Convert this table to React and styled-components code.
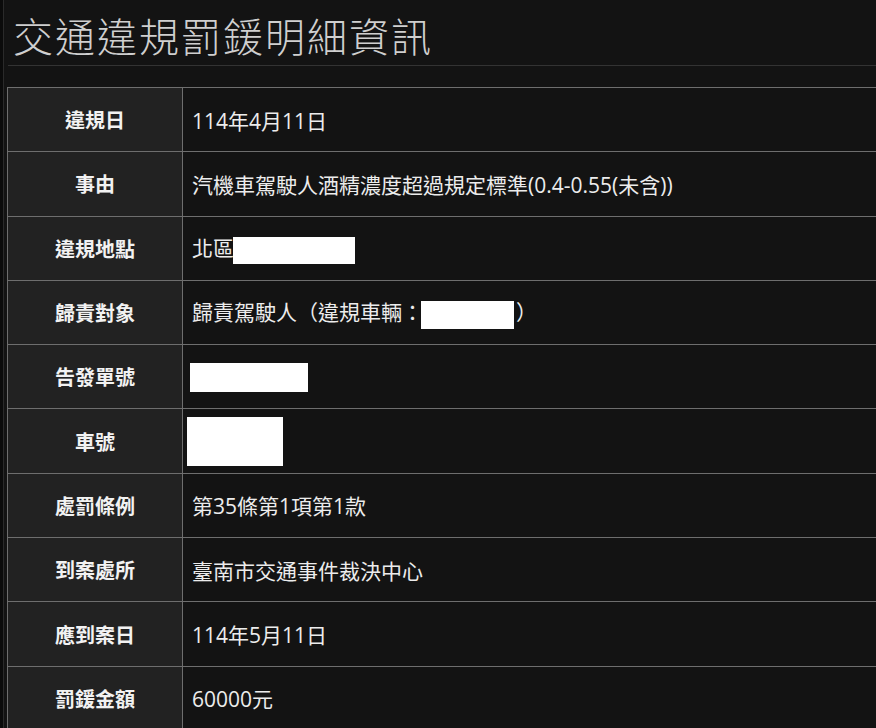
import React from "react";
import styled, { createGlobalStyle } from "styled-components";

const GlobalStyle = createGlobalStyle`
  html, body {
    margin: 0;
    padding: 0;
    background: #131313;
    overflow: hidden;
  }
  body {
    font-family: "Noto Sans CJK TC", "Noto Sans", sans-serif;
  }
`;

const Frame = styled.div`
  min-height: 728px;
  border-left: 3px solid #0b0b0b;
`;

const Content = styled.div`
  min-height: 728px;
  border-left: 1px solid #2a2a2a;
  padding-left: 3px;
`;

const Title = styled.h1`
  margin: 0;
  padding: 11px 0 6px 5px;
  margin-left: 1px;
  font-size: 40px;
  line-height: 48px;
  font-weight: 300;
  letter-spacing: 2px;
  color: #cfcfcf;
  border-bottom: 1px solid #333;
  white-space: nowrap;
`;

const Table = styled.table`
  margin-top: 21px;
  width: 1000px;
  border-collapse: collapse;
  border: 1px solid #6e6e6e;
`;

const Row = styled.tr`
  height: 64.3px;
`;

const Label = styled.th`
  width: 174px;
  padding: 0;
  background: #222;
  border: 1px solid #6e6e6e;
  color: #f2f2f2;
  font-size: 20px;
  font-weight: 700;
  text-align: center;
  vertical-align: middle;
`;

const Value = styled.td`
  padding: 0 0 0 9px;
  background: #131313;
  border: 1px solid #6e6e6e;
  color: #ececec;
  font-family: "Open Sans", "Noto Sans CJK TC", sans-serif;
  font-size: 21px;
  font-weight: 400;
  vertical-align: middle;
  white-space: nowrap;
`;

const Mask = styled.span`
  display: inline-block;
  vertical-align: middle;
  background: #fff;
  width: ${(p) => p.w}px;
  height: ${(p) => p.h}px;
  margin-left: ${(p) => p.ml || 0}px;
  margin-right: ${(p) => p.mr || 0}px;
`;

const rows = [
  { label: "違規日", value: "114年4月11日" },
  { label: "事由", value: "汽機車駕駛人酒精濃度超過規定標準(0.4-0.55(未含))" },
  {
    label: "違規地點",
    value: (
      <>
        北區
        <Mask w={122} h={27} ml={-1} />
      </>
    ),
  },
  {
    label: "歸責對象",
    value: (
      <>
        歸責駕駛人（違規車輛：
        <Mask w={93} h={28} ml={-2} mr={2} />）
      </>
    ),
  },
  { label: "告發單號", value: <Mask w={118} h={29} ml={-2} /> },
  { label: "車號", value: <Mask w={96} h={49} ml={-5} /> },
  { label: "處罰條例", value: "第35條第1項第1款" },
  { label: "到案處所", value: "臺南市交通事件裁決中心" },
  { label: "應到案日", value: "114年5月11日" },
  { label: "罰鍰金額", value: "60000元" },
];

function App() {
  return (
    <>
      <GlobalStyle />
      <Frame>
        <Content>
          <Title>交通違規罰鍰明細資訊</Title>
          <Table>
            <tbody>
              {rows.map((r) => (
                <Row key={r.label}>
                  <Label>{r.label}</Label>
                  <Value>{r.value}</Value>
                </Row>
              ))}
            </tbody>
          </Table>
        </Content>
      </Frame>
    </>
  );
}

export default App;
